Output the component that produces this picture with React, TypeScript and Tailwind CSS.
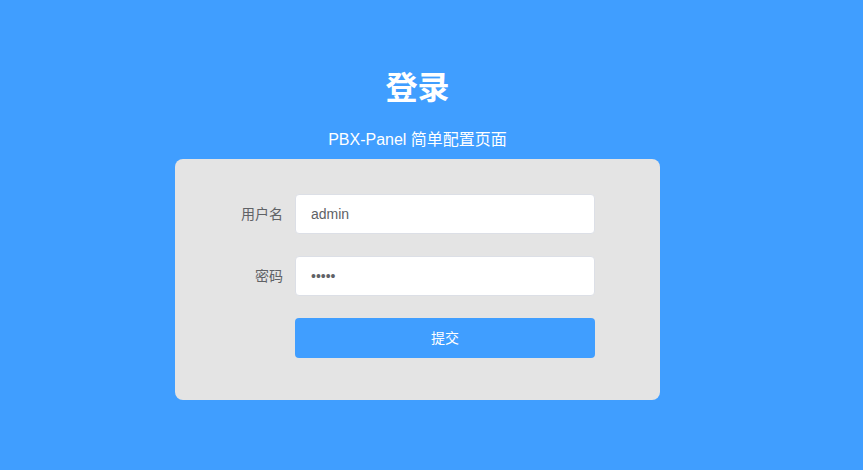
import React from "react";

const font = { fontFamily: '"Liberation Sans", "Noto Sans CJK SC", sans-serif' };

export default function App() {
  return (
    <div className="w-[863px] h-[470px] bg-[#409eff] overflow-hidden" style={font}>
      <div className="flex flex-col items-center pr-[28px] pt-[66px]">
        <h1 className="text-[32px] leading-[44px] font-bold text-white">登录</h1>
        <p className="mt-[19px] text-[16px] leading-[22px] text-white">PBX-Panel 简单配置页面</p>
        <form
          className="mt-[8px] w-[485px] rounded-[8px] bg-[#e4e4e4] pt-[35px] pb-[20px] pl-[40px]"
          onSubmit={(e) => e.preventDefault()}
        >
          <div className="mb-[22px] flex items-center">
            <label className="w-[80px] pr-[12px] text-right text-[14px] text-[#606266]">用户名</label>
            <input
              defaultValue="admin"
              className="h-[40px] w-[300px] rounded-[4px] border border-[#dcdfe6] bg-white px-[15px] text-[14px] text-[#606266] outline-none"
              style={font}
            />
          </div>
          <div className="mb-[22px] flex items-center">
            <label className="w-[80px] pr-[12px] text-right text-[14px] text-[#606266]">密码</label>
            <input
              type="password"
              defaultValue="admin"
              className="h-[40px] w-[300px] rounded-[4px] border border-[#dcdfe6] bg-white px-[15px] text-[14px] text-[#606266] outline-none"
              style={font}
            />
          </div>
          <div className="mb-[22px] flex items-center">
            <div className="w-[80px]" />
            <button
              type="submit"
              className="h-[40px] w-[300px] rounded-[4px] bg-[#409eff] text-[14px] text-white"
              style={font}
            >
              提交
            </button>
          </div>
        </form>
      </div>
    </div>
  );
}
